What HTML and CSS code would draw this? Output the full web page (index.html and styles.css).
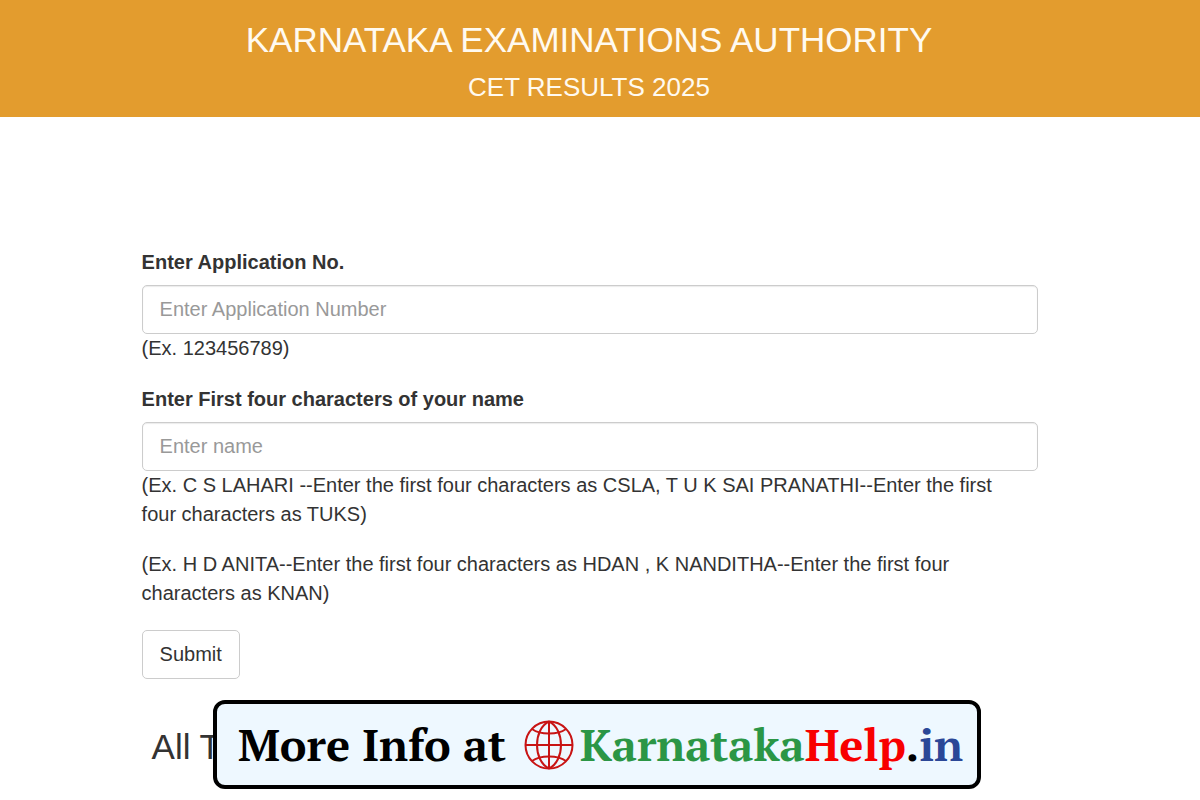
FILE: index.html
```html
<!DOCTYPE html>
<html lang="en">
<head>
<meta charset="UTF-8">
<meta name="viewport" content="width=device-width, initial-scale=1.0">
<title>CET Results 2025</title>
<link rel="stylesheet" href="styles.css">
</head>
<body>
	<header class="header">
		<h1>KARNATAKA EXAMINATIONS AUTHORITY</h1>
		<h2>CET RESULTS 2025</h2>
	</header>

	<main class="container">
		<form>
			<div class="form-group">
				<label for="appNo">Enter Application No.</label>
				<input type="text" class="form-control" id="appNo" name="appNo" placeholder="Enter Application Number">
				<p>(Ex. 123456789)</p>
			</div>
			<div class="form-group">
				<label for="firstName">Enter First four characters of your name</label>
				<input type="text" class="form-control" id="firstName" name="firstName" maxlength="4" placeholder="Enter name">
				<p>(Ex. C S LAHARI --Enter the first four characters as CSLA, T U K SAI PRANATHI--Enter the first four characters as TUKS)</p>
				<p>(Ex. H D ANITA--Enter the first four characters as HDAN , K NANDITHA--Enter the first four characters as KNAN)</p>
			</div>
			<button type="submit" class="btn">Submit</button>
		</form>
		<h3 class="notice">All T</h3>
	</main>

	<!-- info banner over the page -->
	<div class="banner-wrap">
		<div class="banner">
			<span>More Info at</span>
			<a href="#" class="site">
				<svg class="globe" viewBox="0 0 50 50" fill="none" stroke="#c81414" stroke-width="2" aria-hidden="true">
					<circle cx="25" cy="25" r="23.5"/>
					<path d="M25 1.500V48.500M1.500 25H48.500"/>
					<path d="M25 1.500C9 9 9 41 25 48.500M25 1.500C41 9 41 41 25 48.500"/>
					<path d="M8 9C16 15 34 15 42 9M8 41C16 35 34 35 42 41"/>
				</svg>
				<span><span class="green">Karnataka</span><span class="red">Help</span>.<span class="blue">in</span></span>
			</a>
		</div>
	</div>
</body>
</html>
```

FILE: styles.css
```css
* {
	box-sizing: border-box;
}
body {
	margin: 0;
	font-family: "Liberation Sans", Arial, sans-serif;
	font-size: 20px;
	line-height: 29px;
	color: #333;
	background-color: #fff;
}
h1, h2, h3, p {
	margin: 0;
	font-weight: normal;
}
.header {
	padding: 20px 22px 10px 0;
	background-color: #e39c2e;
	color: #fffaf0;
	text-align: center;
}
h1 {
	font-size: 35px;
	line-height: 40px;
}
h2 {
	margin-top: 7px;
	font-size: 26px;
	line-height: 40px;
}
.container {
	padding: 131px 20px 0 0;
}
form, .notice {
	width: 76%;
	margin: 0 auto;
}
.form-group {
	margin-bottom: 22px;
}
label {
	display: block;
	margin-bottom: 8px;
	font-weight: bold;
}
.form-control {
	display: block;
	width: 100%;
	height: 49px;
	padding: 8px 17px;
	font: inherit;
	color: #555;
	background-color: #fff;
	border: 1px solid #ccc;
	border-radius: 5px;
	box-shadow: inset 0 1px 1px rgba(0, 0, 0, 0.08);
}
.form-control::placeholder {
	color: #999;
}
p {
	padding-right: 20px;
}
p + p {
	margin-top: 21px;
}
.btn {
	display: block;
	height: 49px;
	padding: 0 17px;
	font: inherit;
	color: #333;
	background-color: #fff;
	border: 1px solid #ccc;
	border-radius: 5px;
}
.notice {
	margin-top: 48px;
	padding-left: 10px;
	font-size: 35px;
	line-height: 40px;
}
.banner-wrap {
	position: fixed;
	right: 0;
	bottom: 11px;
	left: 0;
	display: flex;
	justify-content: center;
	padding-right: 6px;
}
.banner {
	display: flex;
	align-items: center;
	gap: 18px;
	padding: 12px 14px 12px 21px;
	background-color: #eef8ff;
	border: 4px solid #000;
	border-radius: 12px;
	font-family: "PT Serif", "Liberation Serif", serif;
	font-size: 45px;
	font-weight: bold;
	line-height: 57px;
	color: #000;
	white-space: nowrap;
}
.site {
	display: flex;
	align-items: center;
	gap: 6px;
	color: inherit;
	text-decoration: none;
}
.globe {
	width: 50px;
	height: 50px;
}
.green {
	color: #2b9645;
}
.red {
	color: #f80000;
}
.blue {
	color: #2b4797;
}
```
